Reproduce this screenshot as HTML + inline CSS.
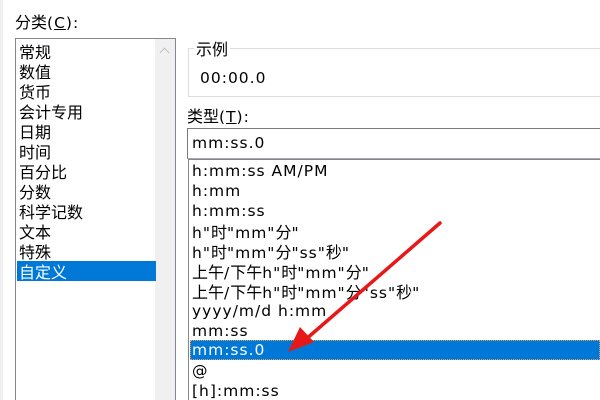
<!DOCTYPE html>
<html><head><meta charset="utf-8"><style>
html,body{margin:0;width:600px;height:400px;overflow:hidden}
body{background:#fff;position:relative;font-family:"DejaVu Sans","Noto Sans CJK SC",sans-serif;font-size:15.5px;letter-spacing:1px;color:#000}
.a{position:absolute;white-space:nowrap}
.it{position:absolute;left:0;height:20px;line-height:20px;white-space:nowrap}
.cj{font-family:"Noto Sans CJK SC",sans-serif;letter-spacing:0;font-size:16px}
</style></head><body>
<div class="a" style="left:0;top:0;width:3px;height:400px;background:#f0f0f0"></div>
<div class="a" style="left:15px;top:10px;line-height:22px"><span class="cj">分类</span>(<u>C</u>):</div>
<div class="a" style="left:15px;top:38px;width:159px;height:370px;border:1px solid #828790;background:#fff">
 <div class="a" style="left:139px;top:0;width:20px;height:370px;background:#f0f0f0"></div>
 <div class="a" style="top:10px;width:6px;height:6px;left:145px;border-left:1.5px solid #c0c0c0;border-top:1.5px solid #c0c0c0;transform:rotate(45deg)"></div>
 <div class="cj" style="position:absolute;left:3px;top:2px">
  <div class="it" style="top:0">常规</div>
  <div class="it" style="top:20px">数值</div>
  <div class="it" style="top:40px">货币</div>
  <div class="it" style="top:60px">会计专用</div>
  <div class="it" style="top:80px">日期</div>
  <div class="it" style="top:100px">时间</div>
  <div class="it" style="top:120px">百分比</div>
  <div class="it" style="top:140px">分数</div>
  <div class="it" style="top:160px">科学记数</div>
  <div class="it" style="top:180px">文本</div>
  <div class="it" style="top:200px">特殊</div>
  <div class="it" style="top:220px;left:-2px;width:137px;padding-left:2px;background:#0078d7;color:#fff">自定义</div>
 </div>
</div>
<div class="a" style="left:188px;top:48px;width:420px;height:47px;border:1px solid #dcdcdc"></div>
<div class="a cj" style="left:194px;top:38px;background:#fff;padding:0 2px;line-height:20px">示例</div>
<div class="a" style="left:200px;top:68px;line-height:20px">00:00.0</div>
<div class="a" style="left:187px;top:104px;line-height:22px"><span class="cj">类型</span>(<u>T</u>):</div>
<div class="a" style="left:187px;top:128px;width:420px;height:29px;border:1px solid #7a7a7a;border-bottom-color:#aaa"></div>
<div class="a" style="left:192px;top:133px;line-height:20px">mm:ss.0</div>
<div class="a" style="left:188px;top:159px;width:420px;height:260px;border-left:1px solid #828790;border-top:1px solid #828790"></div>
<div style="position:absolute;left:190px;top:161px;width:410px">
 <div class="it" style="top:0;left:2px">h:mm:ss AM/PM</div>
 <div class="it" style="top:20px;left:2px">h:mm</div>
 <div class="it" style="top:40px;left:2px">h:mm:ss</div>
 <div class="it" style="top:60px;left:2px">h"<span class="cj">时</span>"mm"<span class="cj">分</span>"</div>
 <div class="it" style="top:80px;left:2px">h"<span class="cj">时</span>"mm"<span class="cj">分</span>"ss"<span class="cj">秒</span>"</div>
 <div class="it" style="top:100px;left:2px"><span class="cj">上午</span>/<span class="cj">下午</span>h"<span class="cj">时</span>"mm"<span class="cj">分</span>"</div>
 <div class="it" style="top:120px;left:2px"><span class="cj">上午</span>/<span class="cj">下午</span>h"<span class="cj">时</span>"mm"<span class="cj">分</span>"ss"<span class="cj">秒</span>"</div>
 <div class="it" style="top:140px;left:2px">yyyy/m/d h:mm</div>
 <div class="it" style="top:160px;left:2px">mm:ss</div>
 <div class="it" style="top:179px;left:0;width:410px;padding-left:2px;box-sizing:border-box;background:#0078d7;color:#fff;outline:1px dotted #e0a060;outline-offset:-1px">mm:ss.0</div>
 <div class="it" style="top:200px;left:2px">@</div>
 <div class="it" style="top:220px;left:2px">[h]:mm:ss</div>
</div>
<svg class="a" style="left:0;top:0" width="600" height="400">
 <line x1="440" y1="223" x2="305" y2="340" stroke="#e81818" stroke-width="3.5" stroke-linecap="round"/>
 <polygon points="288,352 300,327 314,342" fill="#e81818"/>
</svg>
</body></html>
